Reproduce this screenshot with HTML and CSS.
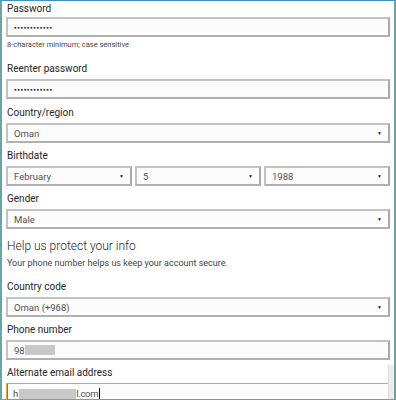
FILE: index.html
```html
<!DOCTYPE html>
<html>
<head>
<meta charset="utf-8">
<link rel="stylesheet" href="styles.css">
</head>
<body>
<div class="frame">
  <div class="form">
    <div class="field">
      <div class="label">Password</div>
      <div class="input"><span class="dots">●●●●●●●●●●●●</span></div>
      <div class="hint">8-character minimum; case sensitive</div>
    </div>
    <div class="field field-wide">
      <div class="label">Reenter password</div>
      <div class="input"><span class="dots">●●●●●●●●●●●●</span></div>
    </div>
    <div class="field">
      <div class="label">Country/region</div>
      <div class="input select"><span>Oman</span><span class="arrow">▼</span></div>
    </div>
    <div class="field">
      <div class="label">Birthdate</div>
      <div class="row">
        <div class="input select"><span>February</span><span class="arrow">▼</span></div>
        <div class="input select"><span>5</span><span class="arrow">▼</span></div>
        <div class="input select"><span>1988</span><span class="arrow">▼</span></div>
      </div>
    </div>
    <div class="field">
      <div class="label">Gender</div>
      <div class="input select"><span>Male</span><span class="arrow">▼</span></div>
    </div>
    <div class="section">
      <div class="heading">Help us protect your info</div>
      <div class="desc">Your phone number helps us keep your account secure.</div>
    </div>
    <div class="field">
      <div class="label">Country code</div>
      <div class="input select"><span>Oman (+968)</span><span class="arrow">▼</span></div>
    </div>
    <div class="field">
      <div class="label">Phone number</div>
      <div class="input"><span>98</span><span class="redact phone-redact"></span></div>
    </div>
    <div class="field">
      <div class="label">Alternate email address</div>
      <div class="input focused"><span>h</span><span class="redact email-redact"></span><span class="tld">l.com</span><span class="caret"></span></div>
    </div>
  </div>
  <div class="scrollthumb"></div>
</div>
</body>
</html>
```
FILE: styles.css
```css
html, body {
  margin: 0;
  padding: 0;
  background: #ffffff;
}
body {
  width: 396px;
  height: 400px;
  overflow: hidden;
  font-family: Roboto, "Open Sans", "Liberation Sans", sans-serif;
}
.frame {
  position: relative;
  box-sizing: border-box;
  width: 396px;
  height: 400px;
  border-left: 2px solid #6aa3a8;
  border-right: 2px solid #6aa3a8;
  border-top: 1px solid #3d93c4;
  border-bottom: 1px solid #6aa3a8;
  overflow: hidden;
  background: #fff;
}
.form {
  padding: 0 4px 0 4px;
  display: flex;
  flex-direction: column;
}
.field {
  display: flex;
  flex-direction: column;
  margin-bottom: 6px;
}
.field-wide {
  margin-bottom: 7px;
}
.label {
  font-size: 10px;
  line-height: 14px;
  color: #262626;
  padding-left: 1px;
  margin-bottom: 3px;
}
.field:first-child .label {
  margin-top: 1px;
  margin-bottom: 1px;
}
.input {
  box-sizing: border-box;
  height: 20px;
  border: 2px solid #c2c2c2;
  border-right-color: #a9a9a9;
  border-bottom-color: #b0b0b0;
  background: #fcfcfc;
  display: flex;
  align-items: center;
  padding: 0 6px 0 6px;
  font-size: 9.5px;
  color: #505050;
}
.dots {
  font-size: 4.5px;
  letter-spacing: 0.5px;
  color: #333;
}
.select {
  justify-content: space-between;
}
.arrow {
  font-size: 5px;
  color: #222;
}
.row {
  display: flex;
  gap: 3px;
}
.row .input {
  flex: 1;
}
.hint {
  font-size: 7.5px;
  color: #444;
  line-height: 10px;
  margin-top: 3px;
  margin-bottom: 6px;
  padding-left: 1px;
}
.section {
  margin-top: 1px;
  margin-bottom: 11px;
  padding-left: 1px;
}
.heading {
  font-size: 12px;
  font-weight: 300;
  color: #262626;
  line-height: 20px;
}
.desc {
  font-size: 9px;
  color: #444;
  line-height: 12px;
  margin-top: 1px;
}
.redact {
  display: inline-block;
  height: 10px;
  background: #c8c8c8;
}
.phone-redact {
  width: 30px;
}
.email-redact {
  width: 57px;
  margin-left: 1px;
}
.tld {
  letter-spacing: -0.3px;
}
.caret {
  display: inline-block;
  width: 1px;
  height: 12px;
  margin-left: 1px;
  background: #000;
}
.focused {
  border: 1px solid #d9a53c;
  border-right: 2px solid #4a80c8;
  border-bottom: none;
  box-shadow: inset 1px 0 0 #4a80c8;
  padding-left: 6px;
}
.scrollthumb {
  position: absolute;
  right: 0;
  top: 364px;
  width: 5px;
  height: 40px;
  background: #ececec;
  border-left: 1px solid #dcdcdc;
}
```
